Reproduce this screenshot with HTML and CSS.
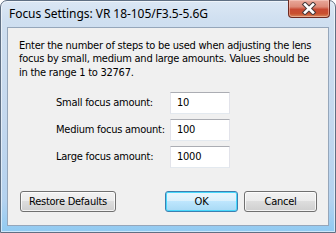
FILE: index.html
```html
<!DOCTYPE html>
<html>
<head>
<meta charset="utf-8">
<link rel="stylesheet" href="styles.css">
</head>
<body>
<div class="window">
  <div class="titlebar">
    <span class="title">Focus Settings: VR 18-105/F3.5-5.6G</span>
    <div class="close">
      <svg width="16" height="13" viewBox="0 0 16 13">
        <path d="M4 2.5 L12 10.5 M12 2.5 L4 10.5" stroke="#4a3a3a" stroke-width="4.6" stroke-linecap="square" fill="none"/>
        <path d="M4 2.5 L12 10.5 M12 2.5 L4 10.5" stroke="#ffffff" stroke-width="2.6" stroke-linecap="square" fill="none"/>
      </svg>
    </div>
  </div>
  <div class="client">
    <p class="intro">Enter the number of steps to be used when adjusting the lens<br>focus by small, medium and large amounts. Values should be<br>in the range 1 to 32767.</p>
    <div class="fields">
      <div class="row"><span class="label">Small focus amount:</span><div class="input">10</div></div>
      <div class="row"><span class="label">Medium focus amount:</span><div class="input">100</div></div>
      <div class="row"><span class="label">Large focus amount:</span><div class="input">1000</div></div>
    </div>
    <div class="buttons">
      <button class="btn restore">Restore Defaults</button>
      <div class="spacer"></div>
      <button class="btn ok">OK</button>
      <button class="btn cancel">Cancel</button>
    </div>
  </div>
</div>
</body>
</html>
```
FILE: styles.css
```css
html, body {
  margin: 0;
  padding: 0;
  width: 336px;
  height: 233px;
  overflow: hidden;
  background: #ffffff;
}
.window {
  box-sizing: border-box;
  width: 336px;
  height: 233px;
  border: 1px solid #5f6f83;
  border-radius: 7px 7px 0 0;
  background: linear-gradient(to bottom, #dbe7f4 0px, #cfdff0 20px, #c4d8ee 120px, #b4d2ef 200px, #8fcaf2 232px);
  display: flex;
  flex-direction: column;
  box-shadow: inset 0 0 0 1px rgba(255,255,255,0.55);
}
.titlebar {
  height: 26px;
  display: flex;
  align-items: flex-start;
  justify-content: space-between;
}
.title {
  font-family: "Noto Sans", "Open Sans", sans-serif;
  font-size: 12px;
  letter-spacing: -0.05px;
  color: #000;
  margin-left: 8px;
  margin-top: 5px;
  line-height: 16px;
}
.close {
  width: 42px;
  height: 18px;
  margin-right: 5px;
  margin-top: -1px;
  box-sizing: border-box;
  border: 1px solid #6e2a20;
  border-top: none;
  border-radius: 0 0 4px 4px;
  background: linear-gradient(to bottom, #e9a99b 0%, #dd8a78 40%, #c84a33 55%, #c9502f 80%, #d88a5c 100%);
  display: flex;
  align-items: center;
  justify-content: center;
  box-shadow: inset 0 0 0 1px rgba(255,220,210,0.45);
}
.close svg { display: block; }
.client {
  margin: 0 6px 0 6px;
  height: 199px;
  box-sizing: border-box;
  border: 1px solid #95a6ba;
  background: #f0f0f0;
  display: flex;
  flex-direction: column;
  font-family: "DejaVu Sans Condensed", "Liberation Sans", sans-serif;
  font-size: 11px;
  letter-spacing: -0.25px;
  color: #000;
}
.intro {
  margin: 11px 0 0 11px;
  line-height: 13.3px;
  white-space: nowrap;
}
.fields {
  margin-top: 13px;
  display: flex;
  flex-direction: column;
  gap: 5px;
  padding-left: 48px;
}
.row {
  display: flex;
  align-items: center;
}
.label {
  width: 114px;
}
.input {
  box-sizing: border-box;
  width: 60px;
  height: 22px;
  background: #fff;
  border: 1px solid #e2e3ea;
  border-top-color: #abadb3;
  border-bottom-color: #e3e9ef;
  padding-left: 6px;
  line-height: 20px;
}
.buttons {
  margin-top: 23px;
  padding: 0 11px 0 12px;
  display: flex;
  gap: 6px;
}
.spacer { flex: 1; }
.btn {
  box-sizing: border-box;
  height: 21px;
  width: 73px;
  padding: 0;
  font-family: inherit;
  font-size: 11px;
  letter-spacing: inherit;
  color: #000;
  border: 1px solid #707070;
  border-radius: 3px;
  background: linear-gradient(to bottom, #f2f2f2 0%, #ebebeb 50%, #dddddd 50%, #cfcfcf 100%);
  box-shadow: inset 0 0 0 1px rgba(255,255,255,0.75);
}
.restore { width: 96px; }
.ok {
  border-color: #3c7fb1;
  background: linear-gradient(to bottom, #eaf6fd 0%, #d9f0fc 50%, #bee6fd 50%, #a7d9f5 100%);
  box-shadow: inset 0 0 0 1px #48d8fb;
}
```
